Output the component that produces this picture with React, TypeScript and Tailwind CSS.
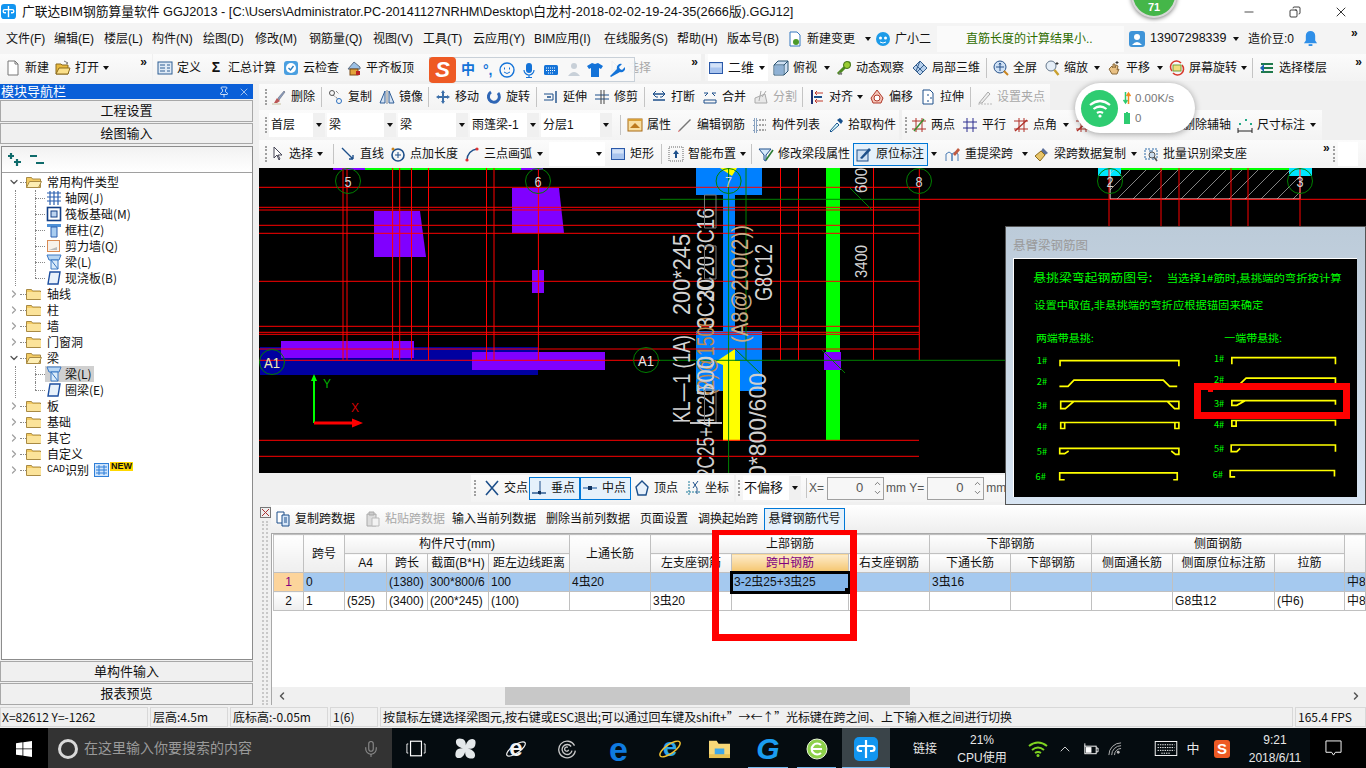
import type { ReactNode } from 'react';
import { Pin, X, ChevronDown, ChevronRight, ChevronLeft, ChevronUp, Minus, Copy, Mic } from 'lucide-react';

// small toolbar icons, all on a 16x16 grid
const ic: Record<string, ReactNode> = {
  page: <><path d="M3 1h7l3 3v11H3z" fill="#fff" stroke="#777" /><path d="M10 1v3h3" fill="none" stroke="#777" /></>,
  folder: <><path d="M1 14V4h5l1 1h6v9z" fill="#e8b93f" stroke="#8a6a1e" /><path d="M1 14l3-6h11l-2 6z" fill="#fbe08a" stroke="#8a6a1e" /><path d="M9 1l4 2-2 1" fill="none" stroke="#777" /></>,
  def: <><rect x="1" y="2" width="14" height="12" fill="#dfeaf6" stroke="#2f5f94" /><path d="M3 5h5M3 8h5M3 11h5M10 5h3M10 8h3M10 11h3" stroke="#2f5f94" /></>,
  cloud: <><rect x="1" y="1" width="14" height="14" rx="3" fill="#4a9fe0" /><circle cx="8" cy="8" r="5" fill="#fff" /><path d="M5.5 8l2 2 3-4" fill="none" stroke="#2c7fc2" strokeWidth="1.4" /></>,
  level: <><path d="M2 9l6-7 6 5v2H2z" fill="#9cc0e4" stroke="#5c6f86" /><rect x="4" y="9" width="8" height="6" fill="#e3a23a" stroke="#7a4a14" /><rect x="10" y="11" width="4" height="4" fill="#b22" /></>,
  box: <><rect x="1.5" y="2.5" width="13" height="11" fill="#a9c4ee" stroke="#2a58a8" /><rect x="2.5" y="3.5" width="11" height="4" fill="#d4e2f7" /></>,
  cube: <><path d="M5 1h10v10l-4 4H1V5z" fill="#cfe0f2" stroke="#27506e" /><path d="M1 5h10v10M11 5l4-4" fill="none" stroke="#27506e" /><rect x="1.5" y="5.5" width="9" height="9" fill="#8fb1d4" /></>,
  orbit: <><path d="M2 14L14 2" stroke="#4d8a1f" strokeWidth="3" /><circle cx="11" cy="5" r="3.5" fill="#9acd32" stroke="#3e6e14" /><path d="M3 13l3 1" stroke="#777" strokeWidth="2" /></>,
  local: <><path d="M1 8l7-7 7 7-7 7z" fill="#b7d0ec" stroke="#365f8e" /><path d="M4 5l7 7M8 1l-4 10M12 5L5 12" stroke="#365f8e" /></>,
  full: <><circle cx="7" cy="7" r="6" fill="#cfe1f5" stroke="#26518a" /><path d="M7 3v8M3 7h8M7 3L6 4.5M7 3l1 1.5" stroke="#26518a" /><path d="M11 11l4 4" stroke="#c9841e" strokeWidth="2" /></>,
  zoom: <><circle cx="7" cy="6" r="5" fill="#e5eef7" stroke="#66788c" /><path d="M10.5 10l4 5" stroke="#c9a02e" strokeWidth="2.4" /><path d="M13 2v3M11.5 3.5h3" stroke="#333" /></>,
  hand: <><path d="M3 9l3-3 1 2V4l2 0v4l1-3 2 1-1 4 2-1-2 5H6z" fill="#e9c184" stroke="#8b6a3a" /><path d="M11 1v3M9.5 2.5h3" stroke="#333" /></>,
  rotate: <><path d="M3 11a6 6 0 0 1 9-8" fill="none" stroke="#d8382c" strokeWidth="1.6" /><path d="M13 5a6 6 0 0 1-9 8" fill="none" stroke="#d8382c" strokeWidth="1.6" /><rect x="4" y="5" width="8" height="6" fill="#f2dd7c" stroke="#6fa03c" /></>,
  layers: <><path d="M2 4h12M2 8h12M2 12h12" stroke="#1f7a4c" strokeWidth="2" /><path d="M1 8l4-4v8z" fill="#1d63b4" /></>,
  del: <><path d="M3 14l3-5 3 3-3 2z" fill="#b55" /><path d="M7 9l6-7 1 1-6 8z" fill="#8aa0c0" stroke="#556" strokeWidth=".5" /><path d="M1 15h9" stroke="#c8c0a0" /></>,
  copy: <><circle cx="4" cy="4" r="2.5" fill="none" stroke="#555" /><circle cx="11" cy="12" r="2.5" fill="none" stroke="#2b70c0" /><path d="M5 6l5 4M8 2l3 3" stroke="#555" strokeDasharray="1 1" /></>,
  mirror: <><path d="M1 14L6 2v12zM15 14L10 2v12z" fill="#d5e3f4" stroke="#2e5d96" /><path d="M8 1v14" stroke="#888" /></>,
  move: <path d="M8 1l2 3H9v3h3V6l3 2-3 2V9H9v3h1l-2 3-2-3h1V9H4v1L1 8l3-2v1h3V4H6z" fill="#3b6ea8" />,
  rot: <path d="M5 3a5.500 5.500 0 1 0 7 1" fill="none" stroke="#2f66b5" strokeWidth="3" />,
  extend: <><path d="M1 5h9v6H1" fill="none" stroke="#1d4f8a" /><path d="M4 8h4M13 2v12" stroke="#1d4f8a" strokeWidth="1.4" /></>,
  trim: <><path d="M1 6h14M1 10h14" stroke="#1d4f8a" /><path d="M7 1v14M10 1v14" stroke="#444" /></>,
  brk: <><path d="M2 5h12M2 11h12" stroke="#1d4f8a" strokeWidth="1.4" /><path d="M5 8h2M9 8h2M5 2L2 5l3 3M11 2l3 3-3 3" fill="none" stroke="#1d4f8a" /></>,
  merge: <><path d="M2 4h4M10 4h4M2 11h12v3H2z" fill="none" stroke="#1d4f8a" /><path d="M3 7l3-3M13 7l-3-3" stroke="#1d4f8a" /></>,
  split: <><path d="M2 14h12L12 5 2 9z" fill="#e8e8e8" stroke="#aaa" /><path d="M8 2l-2 10M13 2l-4 6" stroke="#aaa" /></>,
  align: <><path d="M3 1v14" stroke="#1d2f6f" strokeWidth="2" /><path d="M14 4H6M14 12H6M6 4l2-2M6 4l2 2M6 12l2-2M6 12l2 2" stroke="#c0392b" /><path d="M5 8h8" stroke="#1d4f8a" strokeWidth="2" /></>,
  offset: <><path d="M8 1l6 8-2 5H4L2 9z" fill="#f4c5b8" stroke="#b0392b" /><circle cx="8" cy="9" r="3" fill="#fff" stroke="#b0392b" /></>,
  stretch: <><path d="M3 1h7l3 3v11H3z" fill="#fff" stroke="#1d4f8a" /><path d="M7 6h2M10 9h2M7 12h2" stroke="#1d4f8a" /></>,
  grayset: <><path d="M2 14l9-11 2 2-8 9z" fill="#eee" stroke="#aaa" /><path d="M1 15h14" stroke="#bbb" strokeDasharray="2 1" /></>,
  prop: <><rect x="1" y="2" width="14" height="12" fill="#f9dfa1" stroke="#a86a14" /><path d="M3 11l5-5 5 5z" fill="#bd7a1c" /><rect x="1" y="2" width="14" height="2" fill="#d9a036" /></>,
  edit: <><path d="M2 13L13 2l1 1L3 14z" fill="#777" /><path d="M2 13l-1 2 2-1z" fill="#c33" /></>,
  list: <><path d="M2 2h3v3H2zM2 7h3v3H2zM2 12h3v3H2z" fill="none" stroke="#1d4f8a" strokeDasharray="1 1" /><path d="M7 3h7M7 8h7M7 13h7" stroke="#555" strokeDasharray="2 1" /></>,
  picker: <><path d="M2 14l7-8 2 2-8 7z" fill="#dff" stroke="#16508c" /><path d="M9 3l4 4 2-3-3-3z" fill="#16508c" /></>,
  twop: <><path d="M1 4h14M1 12h14M5 1v14M11 1v14" stroke="#b03028" /><path d="M3 14L13 2" stroke="#3a8f2d" strokeWidth="1.4" /></>,
  para: <path d="M1 5h14M1 11h14M5 1v14M11 1v14" stroke="#2d2f8f" />,
  angle: <><path d="M1 4h14M1 12h14M6 1v14M11 1v14" stroke="#b03028" /><path d="M2 14L14 3" stroke="#b03028" strokeWidth="1.4" /></>,
  dim: <><path d="M1 14h14M1 11v5M15 11v5" stroke="#222" /><rect x="2" y="6" width="2" height="2" fill="#2a8" /><rect x="8" y="2" width="2" height="2" fill="#2a8" /><rect x="13" y="6" width="2" height="2" fill="#2a8" /></>,
  select: <path d="M5 1v11l3-3 2 5 1-1-2-4h4z" fill="#fff" stroke="#445" />,
  line: <path d="M2 2l11 11M13 13v-4M13 13H9" stroke="#1d4f8a" strokeWidth="1.4" />,
  addlen: <><circle cx="8" cy="9" r="6" fill="none" stroke="#1d4f8a" strokeWidth="1.6" /><path d="M8 6v6M5 9h6" stroke="#1d4f8a" /><circle cx="3" cy="3" r="1.5" fill="#c9841e" /></>,
  arc: <><path d="M3 14a11 11 0 0 1 10-11" fill="none" stroke="#1d4f8a" strokeWidth="1.4" /><circle cx="3" cy="14" r="1.6" fill="#d33" /><circle cx="13" cy="3" r="1.6" fill="#d33" /></>,
  smart: <><rect x="1" y="1" width="14" height="14" fill="none" stroke="#666" strokeDasharray="1 1" /><path d="M8 4l3 4H9v4H7V8H5z" fill="#1d4f8a" /></>,
  modify: <><path d="M1 3h12l-5 6v6l-2-1V9z" fill="#d6e9fb" stroke="#1d4f8a" /><path d="M8 14L15 4" stroke="#2a7a30" strokeWidth="1.6" /></>,
  mark: <><rect x="1" y="4" width="11" height="11" fill="#cfe0f3" stroke="#1d4f8a" /><path d="M4 12L13 2l2 2-9 9z" fill="#1d4f8a" /></>,
  lift: <><path d="M1 15V8l3-2 3 2v7M7 15V8l3-2 3 2v7" fill="none" stroke="#4b7cb5" /><path d="M8 8l5-6 2 2-5 6z" fill="#c05a40" /></>,
  brush: <><path d="M9 2l5 5-3 2-4-4z" fill="#5c6f9a" /><path d="M7 5l4 4-5 6-5-5z" fill="#e7c468" stroke="#8b6a1e" /></>,
  batch: <><path d="M2 3h5v10H2zM9 3h5v10H9z" fill="none" stroke="#2c6aa8" strokeDasharray="2 1" /><circle cx="9" cy="9" r="3" fill="#cde" stroke="#555" /><path d="M11 11l3 4" stroke="#555" strokeWidth="1.6" /></>,
  cross: <path d="M2 1l12 14M14 1L2 15" stroke="#1d4f8a" strokeWidth="1.6" />,
  perp: <><path d="M1 13h14" stroke="#1d4f8a" strokeWidth="1.4" /><path d="M9 1v14" stroke="#1d4f8a" /><rect x="7" y="11" width="3" height="3" fill="#12345f" /></>,
  mid: <><path d="M1 8h14" stroke="#4a7db8" strokeWidth="1.4" /><rect x="6" y="6" width="4" height="4" fill="#12345f" /></>,
  vert: <path d="M8 1l6 6-2 8H4L2 7z" fill="#e8f1fb" stroke="#1d4f8a" strokeWidth="1.4" />,
  coord: <><path d="M4 1v14M1 12h14" stroke="#1d7a9a" strokeDasharray="2 1" /><path d="M8 2l4 6v6M13 1L8 8" fill="none" stroke="#1d4f8a" /></>,
  copyrow: <><path d="M2 1h7v11H2z" fill="#fff" stroke="#1d4f8a" /><path d="M7 4h7v11H7z" fill="#d6e6f8" stroke="#1d4f8a" /><path d="M9 7h3M9 9h3M9 11h3" stroke="#1d4f8a" /></>,
  pasterow: <><path d="M2 3h9v12H2z" fill="#ddd" stroke="#aaa" /><path d="M4 1h5v3H4z" fill="#ccc" stroke="#aaa" /><path d="M7 7h7v8H7z" fill="#f3f3f3" stroke="#bbb" /></>,
};

function Ico({ n }: { n: string }) {
  return <svg viewBox="0 0 16 16" className="w-4 h-4 shrink-0">{ic[n]}</svg>;
}

function Caret({ className = '' }: { className?: string }) {
  return <svg viewBox="0 0 6 4" className={`w-[6px] h-1 shrink-0 ${className}`}><path d="M0 0h6L3 4z" fill="#111" /></svg>;
}

function Tool({ w, n, label, gray, caret }: { w: string; n: string; label?: string; gray?: boolean; caret?: boolean }) {
  return (
    <div className={`flex items-center gap-1 shrink-0 whitespace-nowrap ${w} ${gray ? 'text-[#a8a8a8]' : ''}`}>
      <Ico n={n} />
      {label && <span>{label}</span>}
      {caret && <Caret className="ml-auto mr-[6px]" />}
    </div>
  );
}

function Sep() {
  return <div className="w-[13px] h-5 shrink-0 flex justify-center"><div className="w-px h-full bg-[#c4c4c4]" /></div>;
}

function Grip() {
  return <div className="w-[3px] h-4 shrink-0 border-l-2 border-dotted border-[#a0a0a0]" />;
}

function More() {
  return <span className="text-[12px] font-bold leading-none">»</span>;
}

function Bar({ className = '', children }: { className?: string; children: ReactNode }) {
  return <div className={`flex items-center bg-linear-to-b from-[#fbfbfb] to-[#f3f3f3] ${className}`}>{children}</div>;
}

function Combo({ w, label }: { w: string; label: string }) {
  return (
    <div className={`flex items-center justify-between h-[24px] bg-white pl-[2px] shrink-0 mr-[2px] ${w}`}>
      <span>{label}</span>
      <div className="w-3 h-full bg-[#f0f0f0] flex items-center justify-center"><Caret /></div>
    </div>
  );
}

function Folder({ open }: { open?: boolean }) {
  return (
    <svg viewBox="0 0 16 12" className="w-4 h-3 shrink-0">
      <path d="M.5 11.500V1.500h5l1 1.500h8v8.500z" fill="#f3cb63" stroke="#a88a44" />
      {open && <path d="M.5 11.500l3-6h12l-3 6z" fill="#fdeeb4" stroke="#a88a44" />}
      {!open && <rect x="1" y="4" width="14" height="7" fill="#fbe39a" />}
    </svg>
  );
}

const treeIcons: Record<string, ReactNode> = {
  grid: <path d="M1 3h14M1 7h14M1 11h14M4 1v14M8 1v14M12 1v14" stroke="#2a5fb0" fill="none" strokeWidth="1.2" />,
  raft: <><rect x="1.500" y="1.500" width="13" height="13" fill="none" stroke="#123f86" strokeWidth="1.6" /><rect x="5" y="5" width="6" height="6" fill="#bcd3ef" stroke="#123f86" /></>,
  col: <><path d="M1 2h14v3H1z" fill="#4d8fd6" /><path d="M5 5h6v10H5z" fill="#a8ccf0" stroke="#2a5fb0" /></>,
  wall: <><rect x="1.500" y="2.500" width="12" height="11" fill="#f7f1ea" stroke="#d98b55" /><path d="M3 12l8-3v3z" fill="#bbb" /></>,
  beam: <><path d="M1 1h14l-2 5H3z" fill="#b8d6f3" stroke="#3a78c4" /><path d="M5 6h7v9H5z" fill="#d9ebfa" stroke="#3a78c4" /><path d="M5 6l7 9" stroke="#3a78c4" /></>,
  slab: <path d="M4 2h10l-2 12H2z" fill="#e8f1fb" stroke="#1c4ea0" strokeWidth="1.4" />,
};

function TreeGroup({ label, open, children }: { label: ReactNode; open?: boolean; children?: ReactNode }) {
  return (
    <>
      <div className="flex items-center h-4 pl-[6px]">
        {open ? <ChevronDown className="w-3 h-3 text-[#555]" strokeWidth={2.5} /> : <ChevronRight className="w-3 h-3 text-[#a0a0a0]" strokeWidth={2.5} />}
        <div className="w-[6px] border-t border-dotted border-[#888]" />
        <Folder open={open} />
        <div className="ml-[5px] flex items-center">{label}</div>
      </div>
      {children}
    </>
  );
}

function TreeChild({ n, label, last, active }: { n: string; label: string; last?: boolean; active?: boolean }) {
  return (
    <div className="flex items-center h-4">
      <div className="ml-[13px] w-[20px] h-full border-l border-dotted border-[#888]" />
      <div className="relative w-[10px] h-full">
        <div className={`absolute left-0 top-0 border-l border-dotted border-[#888] ${last ? 'h-1/2' : 'h-full'}`} />
        <div className="absolute left-0 top-1/2 w-full border-t border-dotted border-[#888]" />
      </div>
      <div className={`flex items-center gap-[3px] pr-[2px] h-4 ${active ? 'bg-[#d0d0d0]' : ''}`}>
        <svg viewBox="0 0 16 16" className="w-4 h-4 ml-[1px]">{treeIcons[n]}</svg>
        <span>{label}</span>
      </div>
    </div>
  );
}

function NavBtn({ label, h }: { label: string; h: string }) {
  return <div className={`flex items-center justify-center bg-[#f0f0f0] border border-[#a8a8a8] mt-px text-[13px] ${h}`}>{label}</div>;
}

const H = ({ children, ...rest }: { children?: ReactNode; colSpan?: number; rowSpan?: number; className?: string }) => (
  <td {...rest} className={`border border-[#c0c0c0] bg-linear-to-b from-white to-[#eeeeee] text-center p-0 h-[19px] overflow-hidden whitespace-nowrap ${rest.className ?? ''}`}>{children}</td>
);

const C = ({ children, className = '' }: { children?: ReactNode; className?: string }) => (
  <td className={`border border-[#c0c0c0] px-[2px] p-0 overflow-hidden whitespace-nowrap h-[19px] ${className}`}>{children}</td>
);

const COLS = ['w-[30px]', 'w-[41px]', 'w-[42px]', 'w-[41px]', 'w-[61px]', 'w-[81px]', 'w-[81px]', 'w-[81px]', 'w-[117px]', 'w-[81px]', 'w-[81px]', 'w-[81px]', 'w-[81px]', 'w-[102px]', 'w-[70px]', 'w-[21px]'];

function RebarTable() {
  return (
    <table className="table-fixed border-collapse w-[1091px] text-[12px] leading-none">
      <colgroup>{COLS.map((c, i) => <col key={i} className={c} />)}</colgroup>
      <tbody>
        <tr>
          <H rowSpan={2} />
          <H rowSpan={2}>跨号</H>
          <H colSpan={4}>构件尺寸(mm)</H>
          <H rowSpan={2}>上通长筋</H>
          <H colSpan={3}>上部钢筋</H>
          <H colSpan={2}>下部钢筋</H>
          <H colSpan={3}>侧面钢筋</H>
          <H rowSpan={2} />
        </tr>
        <tr>
          <H className="border-l-black">A4</H>
          <H>跨长</H>
          <H>截面(B*H)</H>
          <H>距左边线距离</H>
          <H>左支座钢筋</H>
          <td className="border border-[#c0c0c0] bg-linear-to-b from-[#fdeccb] to-[#f5c468] text-center text-[#800080] p-0 h-[19px]">跨中钢筋</td>
          <H>右支座钢筋</H>
          <H>下通长筋</H>
          <H>下部钢筋</H>
          <H>侧面通长筋</H>
          <H>侧面原位标注筋</H>
          <H>拉筋</H>
        </tr>
        <tr className="bg-[#a5c9ef]">
          <td className="border border-[#c0c0c0] bg-[#fcd49b] text-center text-[#800080] p-0">1</td>
          <C>0</C>
          <C className="border-l-black" />
          <C>(1380)</C>
          <C>300*800/6</C>
          <C>100</C>
          <C>4虫20</C>
          <C />
          <td className="relative border border-[#c0c0c0] bg-[#84b6ea] px-[2px] p-0 outline-[3px] -outline-offset-1 outline-black whitespace-nowrap">
            3-2虫25+3虫25
            <div className="absolute -right-[2px] -bottom-[2px] w-[5px] h-[5px] bg-black" />
          </td>
          <C />
          <C>3虫16</C>
          <C />
          <C />
          <C />
          <C />
          <C>中8</C>
        </tr>
        <tr>
          <td className="border border-[#c0c0c0] bg-linear-to-b from-white to-[#eeeeee] text-center p-0">2</td>
          <C>1</C>
          <C className="border-l-black">(525)</C>
          <C>(3400)</C>
          <C>(200*245)</C>
          <C>(100)</C>
          <C />
          <C>3虫20</C>
          <C />
          <C />
          <C />
          <C />
          <C />
          <C>G8虫12</C>
          <C>(中6)</C>
          <C>中8</C>
        </tr>
      </tbody>
    </table>
  );
}

function Cad() {
  const reds = [187.3, 207.3, 210, 225.3, 233.3, 281.3, 326.3, 332.3, 334.3, 349, 440.3, 456.3];
  const vr = [343, 347, 392.6, 399.7, 411.5, 428.5, 486.5, 494, 538.4, 780.5, 798.5, 873.5, 919.3];
  const vr2 = [1109, 1161, 1179, 1231, 1248, 1300];
  const circles: [number, number, string, string, number][] = [
    [348, 181, '5', '#d8d8d8', 7], [538, 181, '6', '#d8d8d8', 7], [728.6, 181, '7', '#d8d8d8', 7], [919, 181, '8', '#d8d8d8', 7],
    [1110, 181, '2', '#d8d8d8', 7], [1300, 181, '3', '#d8d8d8', 7], [272, 362, 'A1', '#f2efb0', 16], [646, 360, 'A1', '#e8e8e8', 16],
  ];
  const rot = (x: number, y: number, s: string, len: number, fill: string, size = 24) => (
    <text x={x} y={y} transform={`rotate(-90 ${x} ${y})`} fontSize={size} fill={fill} textLength={len} lengthAdjust="spacingAndGlyphs" fontFamily="Liberation Sans">{s}</text>
  );
  return (
    <svg viewBox="259 168 1107 305" className="block w-full h-full bg-black">
      <defs>
        <pattern id="hatch" width="16" height="16" patternUnits="userSpaceOnUse" patternTransform="translate(1100 168)">
          <path d="M0 16L16 0" stroke="#bbbbbb" strokeWidth=".7" />
        </pattern>
      </defs>
      <rect x="333" y="168" width="32" height="2" fill="#8000ff" />
      <rect x="365" y="168" width="156" height="2" fill="#00ff00" />
      <rect x="521" y="168" width="22" height="2" fill="#8000ff" />
      <rect x="260" y="347" width="278" height="28" fill="#0000a0" />
      <rect x="281" y="341" width="133" height="17" fill="#8000ff" />
      <rect x="472" y="352" width="133" height="18" fill="#8000ff" />
      <path d="M512 188h47l5 45h-52z" fill="#8000ff" />
      <path d="M374 211h46l6 46h-52z" fill="#8000ff" />
      <rect x="532" y="270" width="12" height="23" fill="#8000ff" />
      <rect x="696" y="168" width="66" height="27" fill="#0080ff" />
      <rect x="723" y="195" width="12" height="136" fill="#0080ff" />
      <rect x="696" y="331" width="66" height="60" fill="#0080ff" />
      <path d="M720 168h17l-5 8z" fill="#ffff00" />
      <rect x="723" y="361" width="17" height="80" fill="#ffff00" />
      <path d="M715.500 362l19.500-13v12h-12v4z" fill="#ffff00" />
      <rect x="826" y="168" width="14" height="272" fill="#00ff00" />
      <rect x="824" y="352" width="17" height="18" fill="#8000ff" />
      {/* hatched strip on the right */}
      <rect x="1098" y="168" width="23" height="8" fill="#00e5ff" />
      <rect x="1289" y="168" width="23" height="8" fill="#00e5ff" />
      <rect x="1121" y="168" width="168" height="2" fill="#00ff00" />
      <path d="M1110 170h190v29h-190z" fill="url(#hatch)" />
      <path d="M1110 170v29h190v-29" fill="none" stroke="#fff" />
      {/* red grid */}
      {reds.map(y => <line key={y} x1="259" x2="919" y1={y} y2={y} stroke="#ff0000" />)}
      <line x1="919" x2="1366" y1="199.300" y2="199.300" stroke="#ff0000" />
      <line x1="259" x2="660" y1="360.300" y2="360.300" stroke="#ff0000" />
      {vr.map(x => <line key={x} x1={x} x2={x} y1="168" y2="360" stroke="#ff0000" />)}
      {vr2.map(x => <line key={x} x1={x} x2={x} y1="168" y2="230" stroke="#ff0000" />)}
      <line x1="660" x2="919" y1="199.300" y2="199.300" stroke="#008000" />
      <line x1="660" x2="1010" y1="360.300" y2="360.300" stroke="#008000" />
      <line x1="728.600" x2="728.600" y1="168" y2="473" stroke="#008000" />
      <line x1="746" x2="746" y1="168" y2="360" stroke="#008000" />
      <path d="M850 188l22 22M822 350l23 23M735 349l25 24" stroke="#008000" fill="none" />
      {circles.map(([x, y, t, c, len]) => (
        <g key={`${x}-${t}`}>
          <circle cx={x} cy={y} r="12.500" fill="none" stroke="#008000" />
          <text x={x} y={y + 5.500} textAnchor="middle" fontSize="15" fill={c} textLength={len} lengthAdjust="spacingAndGlyphs" fontFamily="Liberation Sans">{t}</text>
        </g>
      ))}
      {/* rotated annotations */}
      {rot(690, 423, 'KL—1 (1A)', 88, '#d4d4d4')}
      {rot(690, 315, '200*245', 81, '#d4d4d4')}
      {rot(714, 478, '2C25+4C20', 92, '#d0d0d0')}
      {rot(714, 395, '(2)@1500', 78, '#c08a50')}
      {rot(714, 396, '500', 40, '#d0d0d0')}
      {rot(714, 329, '3C20', 50, '#d4d4d4')}
      {rot(714, 300, '3C20', 44, '#d4d4d4')}
      {rot(714, 254, '3C16', 46, '#d4d4d4')}
      {rot(748.400, 343, '(A8@200(2))', 118, '#c9ab88')}
      {rot(772, 301, 'G8C12', 57, '#d4d4d4')}
      {rot(766, 478, '0*800/600', 105, '#cfcfcf')}
      {rot(867, 278, '3400', 33, '#d4d4d4', 17)}
      {rot(867, 193, '600', 25, '#d4d4d4', 17)}
      <path d="M704.500 195h11.500v33h-11.500zM704.500 246h11.500v33h-11.500zM704.500 390h11.500v33h-11.500z" fill="none" stroke="#777" />
      <line x1="690" x2="722" y1="423" y2="423" stroke="#fff" strokeWidth="1.500" />
      {/* origin axes */}
      <path d="M313 423v-42h-2l3-7 3 7h-2v42z" fill="#00ff00" />
      <path d="M314 421.500h38v-3l11 4.500-11 4.500v-3h-38z" fill="#ff0000" />
      <text x="323" y="388" fontSize="12" fill="#00b000" fontFamily="Liberation Sans">Y</text>
      <text x="351" y="412" fontSize="12" fill="#d00000" fontFamily="Liberation Sans">X</text>
    </svg>
  );
}

function CantileverDrawing() {
  const green = (x: number, y: number, s: string, size = 33, len?: number) => (
    <text x={x} y={y} fontSize={size} fill="#00ff00" textLength={len} lengthAdjust="spacingAndGlyphs" fontFamily="Noto Sans CJK SC">{s}</text>
  );
  const paths = [
    'M176 602V585H535V602',
    'M174 663H200L218 644H488L507 663H530',
    'M220 708H178V730H192L218 708H510L535 708V730H522L500 708',
    'M208 772H178V790H190V772H535V790H523V772',
    'M202 858L190 866H175V850H535V868H525L512 858',
    'M190 945H175V924H530V945H518',
    'M695 596V576H1008V596',
    'M720 655L738 638H1008V655',
    'M740 706H695V720H710L735 706H1008V718',
    'M710 766H695V783H708V766H1008V782',
    'M720 850L710 860H693V840H1008V860',
    'M705 936H690V917H1005V935',
  ];
  const leftY = [596, 658, 730, 794, 870, 946];
  const rightY = [590, 652, 724, 788, 862, 940];
  return (
    <svg viewBox="40 278 1030 719" className="block w-full h-full">
      {green(95, 347, '悬挑梁弯起钢筋图号:', 36, 360)}
      {green(498, 346, '当选择1#筋时,悬挑端的弯折按计算', 30, 529)}
      {green(98, 428, '设置中取值,非悬挑端的弯折应根据锚固来确定', 30, 692)}
      {green(103, 528, '两端带悬挑:', 30, 175)}
      {green(672, 530, '一端带悬挑:', 30, 175)}
      {leftY.map((y, i) => <g key={y}>{green(i === 5 ? 102 : 106, y, `${i + 1}#`, 28)}</g>)}
      {rightY.map((y, i) => <g key={y}>{green(i === 5 ? 637 : 641, y, `${i + 1}#`, 28)}</g>)}
      {paths.map(d => <path key={d} d={d} fill="none" stroke="#ffff00" strokeWidth="5" />)}
    </svg>
  );
}

function Slot({ w, children, className = '' }: { w: string; children?: ReactNode; className?: string }) {
  return <div className={`flex items-center justify-center shrink-0 h-full ${w} ${className}`}>{children}</div>;
}

function Underlined({ w, active, children }: { w: string; active?: boolean; children: ReactNode }) {
  return (
    <div className={`relative flex items-center justify-center shrink-0 h-full ${w} ${active ? 'bg-[#3a4449]' : ''}`}>
      {children}
      <div className="absolute left-0 right-0 bottom-0 h-[2px] bg-[#76b9ed]" />
    </div>
  );
}

function AppLogo({ className }: { className: string }) {
  return (
    <svg viewBox="0 0 24 24" className={className}>
      <rect width="24" height="24" rx="5" fill="#1295f0" />
      <path d="M12 3v18M12 9H6a2 2 0 0 0 0 5h2M12 9h6a2 2 0 0 1 0 5h-2" fill="none" stroke="#fff" strokeWidth="2.200" />
    </svg>
  );
}

export default function App() {
  return (
    <div className="relative w-[1366px] h-[768px] overflow-hidden bg-[#f0f0f0] text-[12px] text-[#111] font-['Liberation_Sans','Noto_Sans_CJK_SC',sans-serif]">
      {/* title bar */}
      <div className="flex items-center h-[23px] bg-white">
        <AppLogo className="w-[15px] h-[15px] ml-[1px]" />
        <span className="ml-[6px] text-[12.75px] whitespace-nowrap">{'广联达BIM钢筋算量软件 GGJ2013 - [C:\\Users\\Administrator.PC-20141127NRHM\\Desktop\\白龙村-2018-02-02-19-24-35(2666版).GGJ12]'}</span>
        <div className="ml-auto flex items-center h-full mr-[2px]">
          <Slot w="w-[46px]"><Minus className="w-[14px] h-[14px] text-black" strokeWidth={1.2} /></Slot>
          <Slot w="w-[46px]"><Copy className="w-3 h-3 -scale-x-100 text-black" strokeWidth={1.5} /></Slot>
          <Slot w="w-[46px]"><X className="w-4 h-4 text-black" strokeWidth={1.2} /></Slot>
        </div>
      </div>

      {/* menu bar */}
      <div className="flex items-center h-[31px] bg-[#f4f4f4] pl-[6px] whitespace-nowrap">
        <span className="w-[48px] shrink-0">文件(F)</span>
        <span className="w-[50px] shrink-0">编辑(E)</span>
        <span className="w-[48px] shrink-0">楼层(L)</span>
        <span className="w-[51px] shrink-0">构件(N)</span>
        <span className="w-[52px] shrink-0">绘图(D)</span>
        <span className="w-[54px] shrink-0">修改(M)</span>
        <span className="w-[64px] shrink-0">钢筋量(Q)</span>
        <span className="w-[50px] shrink-0">视图(V)</span>
        <span className="w-[50px] shrink-0">工具(T)</span>
        <span className="w-[61px] shrink-0">云应用(Y)</span>
        <span className="w-[70px] shrink-0">BIM应用(I)</span>
        <span className="w-[73px] shrink-0">在线服务(S)</span>
        <span className="w-[50px] shrink-0">帮助(H)</span>
        <span className="w-[60px] shrink-0">版本号(B)</span>
        <div className="flex items-center gap-[4px] w-[88px] shrink-0">
          <svg viewBox="0 0 16 16" className="w-4 h-[18px] shrink-0"><path d="M3 1h7l3 3v11H3z" fill="#fff" stroke="#3578c0" /><circle cx="9" cy="11" r="3" fill="#4c9a2a" /></svg>
          <span>新建变更</span>
          <Caret className="ml-[6px]" />
        </div>
        <div className="flex items-center gap-[4px] w-[62px] shrink-0">
          <svg viewBox="0 0 16 16" className="w-4 h-4 shrink-0"><circle cx="8" cy="8" r="7" fill="#1d9be8" /><circle cx="5.500" cy="7" r="1.500" fill="#fff" /><circle cx="10.500" cy="7" r="1.500" fill="#fff" /><path d="M5 11q3 2 6 0" stroke="#fff" fill="none" /></svg>
          <span>广小二</span>
        </div>
        <div className="flex items-center h-[26px] w-[187px] shrink-0 bg-[#fafafa] pl-[29px] text-[#2f6d00]">直筋长度的计算结果小..</div>
        <svg viewBox="0 0 16 16" className="w-4 h-4 ml-[5px] shrink-0"><rect width="16" height="16" rx="3" fill="#3f94d8" /><circle cx="8" cy="6" r="3" fill="#fff" /><path d="M3 14q5-6 10 0z" fill="#fff" /></svg>
        <span className="ml-[5px] w-[80px] shrink-0 text-[12.5px]">13907298339</span>
        <Caret className="ml-[3px]" />
        <span className="ml-[9px]">造价豆:0</span>
        <svg viewBox="0 0 16 18" className="w-[15px] h-[17px] ml-[9px]"><path d="M8 1a5 5 0 0 1 5 5v5l2 3H1l2-3V6a5 5 0 0 1 5-5z" fill="#2f8fe8" /><rect x="6" y="15" width="4" height="2" fill="#2f8fe8" /></svg>
        <span className="ml-[33px] mb-3"><More /></span>
      </div>

      {/* first toolbar row */}
      <div className="flex h-[30px] pb-[3px] gap-px">
        <Bar className="w-[152px] shrink-0 pl-[5px] pr-[5px]">
          <Tool w="w-[50px]" n="page" label="新建" />
          <Tool w="w-[60px]" n="folder" label="打开" caret />
          <span className="ml-auto mb-3"><More /></span>
        </Bar>
        <Bar className="w-[548px] shrink-0 pl-[4px]">
          <Tool w="w-[51px]" n="def" label="定义" />
          <div className="flex items-center w-[75px] shrink-0 gap-[4px]"><span className="w-4 text-center text-[14px] font-bold">Σ</span><span>汇总计算</span></div>
          <Tool w="w-[63px]" n="cloud" label="云检查" />
          <Tool w="w-[71px]" n="level" label="平齐板顶" />
          <div className="w-[190px] shrink-0" />
          <Tool w="w-[48px]" n="select" label="选择" gray />
          <span className="ml-auto mb-3 mr-[3px]"><More /></span>
        </Bar>
        <div className="w-[2px] shrink-0" />
        <Bar className="flex-1 pl-[3px] pr-[4px]">
          <div className="flex items-center gap-1 w-[60px] h-full bg-white shrink-0">
            <Ico n="box" /><span className="text-[13px]">二维</span><Caret className="ml-auto mr-[3px]" />
          </div>
          <div className="w-[5px] shrink-0" />
          <Tool w="w-[63px]" n="cube" label="俯视" caret />
          <Tool w="w-[76px]" n="orbit" label="动态观察" />
          <Tool w="w-[68px]" n="local" label="局部三维" />
          <Sep />
          <Tool w="w-[51px]" n="full" label="全屏" />
          <Tool w="w-[62px]" n="zoom" label="缩放" caret />
          <Tool w="w-[63px]" n="hand" label="平移" caret />
          <Tool w="w-[77px]" n="rotate" label="屏幕旋转" caret />
          <Sep />
          <Tool w="w-[70px]" n="layers" label="选择楼层" />
          <span className="ml-auto mb-3"><More /></span>
        </Bar>
      </div>

      {/* work area */}
      <div className="flex h-[621px]">
        {/* module nav */}
        <div className="flex flex-col w-[253px] shrink-0">
          <div className="flex items-center h-[15px] bg-[#0a5fd8] text-white pl-[1px] text-[13px] leading-none">
            <span>模块导航栏</span>
            <Pin className="w-3 h-3 ml-auto rotate-0" strokeWidth={1.5} />
            <X className="w-3 h-3 ml-[8px] mr-[3px]" strokeWidth={1.2} />
          </div>
          <NavBtn label="工程设置" h="h-[22px]" />
          <NavBtn label="绘图输入" h="h-[21px]" />
          <div className="flex flex-col flex-1 mt-[2px] ml-[1px] border border-[#8c8c8c] bg-white min-h-0">
            <div className="flex items-center gap-[6px] h-[26px] shrink-0 pl-[5px] bg-linear-to-b from-[#f2f2f2] to-white border-b border-[#a0a0a0]">
              <svg viewBox="0 0 16 16" className="w-4 h-4"><path d="M4 1v6M1 4h6M10 7v7M7 10h7" stroke="#0f6b6b" strokeWidth="2.200" /></svg>
              <svg viewBox="0 0 16 16" className="w-4 h-4"><path d="M1 4h7M7 11h8" stroke="#0f6b6b" strokeWidth="2.200" /></svg>
            </div>
            <div className="flex-1 pt-px text-[12px] leading-4 font-['Noto_Sans_CJK_SC',sans-serif]">
              <TreeGroup open label="常用构件类型">
                <TreeChild n="grid" label="轴网(J)" />
                <TreeChild n="raft" label="筏板基础(M)" />
                <TreeChild n="col" label="框柱(Z)" />
                <TreeChild n="wall" label="剪力墙(Q)" />
                <TreeChild n="beam" label="梁(L)" />
                <TreeChild n="slab" label="现浇板(B)" last />
              </TreeGroup>
              <TreeGroup label="轴线" />
              <TreeGroup label="柱" />
              <TreeGroup label="墙" />
              <TreeGroup label="门窗洞" />
              <TreeGroup open label="梁">
                <TreeChild n="beam" label="梁(L)" active />
                <TreeChild n="slab" label="圈梁(E)" last />
              </TreeGroup>
              <TreeGroup label="板" />
              <TreeGroup label="基础" />
              <TreeGroup label="其它" />
              <TreeGroup label="自定义" />
              <TreeGroup label={<><span className="text-[10px] font-['Liberation_Mono',monospace]">CAD</span><span>识别</span>
                <svg viewBox="0 0 15 14" className="w-[15px] h-[14px] ml-[5px]"><rect x=".5" y=".5" width="14" height="13" fill="#cfe4fb" stroke="#2f7fd8" /><path d="M5 2v10M10 2v10M2 4h11M2 7h11M2 10h11" stroke="#2f7fd8" /></svg>
                <span className="self-start ml-px px-px bg-[#ffd800] text-[9px] leading-[9px] font-bold font-['Liberation_Sans',sans-serif]">NEW</span></>} />
            </div>
          </div>
          <NavBtn label="单构件输入" h="h-[21px]" />
          <NavBtn label="报表预览" h="h-[22px]" />
        </div>

        {/* drawing side */}
        <div className="flex flex-col ml-[6px] w-[1107px] shrink-0">
          <Bar className="h-[26px] w-[791px] shrink-0 pl-[6px]">
            <Grip />
            <div className="w-[3px] shrink-0" />
            <Tool w="w-[44px]" n="del" label="删除" />
            <Sep />
            <Tool w="w-[51px]" n="copy" label="复制" />
            <Tool w="w-[43px]" n="mirror" label="镜像" />
            <Sep />
            <Tool w="w-[51px]" n="move" label="移动" />
            <Tool w="w-[44px]" n="rot" label="旋转" />
            <Sep />
            <Tool w="w-[51px]" n="extend" label="延伸" />
            <Tool w="w-[44px]" n="trim" label="修剪" />
            <Sep />
            <Tool w="w-[51px]" n="brk" label="打断" />
            <Tool w="w-[51px]" n="merge" label="合并" />
            <Tool w="w-[43px]" n="split" label="分割" gray />
            <Sep />
            <Tool w="w-[60px]" n="align" label="对齐" caret />
            <Tool w="w-[51px]" n="offset" label="偏移" />
            <Tool w="w-[44px]" n="stretch" label="拉伸" />
            <Sep />
            <Tool w="w-[73px]" n="grayset" label="设置夹点" gray />
          </Bar>

          <div className="flex h-[30px] shrink-0">
            <Bar className="w-[640px] shrink-0 pl-[6px]">
              <Grip />
              <div className="w-[1px] shrink-0" />
              <Combo w="w-[56px]" label="首层" />
              <Combo w="w-[69px]" label="梁" />
              <Combo w="w-[70px]" label="梁" />
              <Combo w="w-[69px]" label="雨篷梁-1" />
              <Combo w="w-[71px]" label="分层1" />
              <Sep />
              <Tool w="w-[50px]" n="prop" label="属性" />
              <Tool w="w-[75px]" n="edit" label="编辑钢筋" />
              <Tool w="w-[76px]" n="list" label="构件列表" />
              <Tool w="w-[72px]" n="picker" label="拾取构件" />
            </Bar>
            <div className="w-[3px] shrink-0" />
            <Bar className="w-[420px] shrink-0 pl-[3px]">
              <Grip />
              <div className="w-[3px] shrink-0" />
              <Tool w="w-[51px]" n="twop" label="两点" />
              <Tool w="w-[51px]" n="para" label="平行" />
              <Tool w="w-[62px]" n="angle" label="点角" caret />
              <Tool w="w-[88px]" n="angle" />
              <Tool w="w-[74px]" n="del" label="删除辅轴" />
              <Tool w="w-[85px]" n="dim" label="尺寸标注" caret />
            </Bar>
          </div>

          <Bar className="h-[28px] shrink-0 pl-[6px] pr-[3px]">
            <Grip />
            <div className="w-px shrink-0" />
            <Tool w="w-[58px]" n="select" label="选择" caret />
            <Sep />
            <Tool w="w-[50px]" n="line" label="直线" />
            <Tool w="w-[74px]" n="addlen" label="点加长度" />
            <Tool w="w-[85px]" n="arc" label="三点画弧" caret />
            <div className="flex items-center justify-end w-[56px] h-[24px] bg-white shrink-0 pr-[3px]"><Caret /></div>
            <div className="w-[5px] shrink-0" />
            <Tool w="w-[45px]" n="box" label="矩形" />
            <Sep />
            <Tool w="w-[77px]" n="smart" label="智能布置" caret />
            <Sep />
            <Tool w="w-[95px]" n="modify" label="修改梁段属性" />
            <div className="flex items-center gap-1 w-[75px] h-[23px] shrink-0 border border-[#0078d7] bg-[#e5f1fb] pl-[2px]"><Ico n="mark" /><span>原位标注</span></div>
            <Caret className="mx-[3px]" />
            <div className="w-[5px] shrink-0" />
            <Tool w="w-[89px]" n="lift" label="重提梁跨" caret />
            <Tool w="w-[109px]" n="brush" label="梁跨数据复制" caret />
            <Tool w="w-[110px]" n="batch" label="批量识别梁支座" />
            <span className="ml-[70px] mb-3"><More /></span>
            <div className="w-[3px] shrink-0" />
            <Grip />
            <div className="w-[20px] h-[24px] bg-white ml-[2px]" />
          </Bar>

          <div className="h-[305px] shrink-0 bg-black"><Cad /></div>

          {/* snap bar */}
          <div className="flex items-center h-[30px] shrink-0 pl-[212px]">
            <Bar className="h-[27px] w-[263px] shrink-0 pl-[3px]">
              <Grip />
              <div className="w-[7px] shrink-0" />
              <Tool w="w-[45px]" n="cross" label="交点" />
              <div className="flex items-center gap-1 w-[51px] h-[23px] shrink-0 border border-[#0078d7] bg-[#e5f1fb] pl-px"><Ico n="perp" /><span>垂点</span></div>
              <div className="flex items-center gap-1 w-[51px] h-[23px] shrink-0 border border-[#0078d7] bg-[#e5f1fb] pl-px"><Ico n="mid" /><span>中点</span></div>
              <div className="w-[3px] shrink-0" />
              <Tool w="w-[51px]" n="vert" label="顶点" />
              <Tool w="w-[40px]" n="coord" label="坐标" />
            </Bar>
            <Bar className="h-[27px] flex-1 ml-[2px] pl-[2px] text-[#555]">
              <Grip />
              <div className="flex items-center justify-between w-[58px] h-[24px] ml-[2px] bg-white pl-px text-[#111] text-[13px]">
                <span>不偏移</span>
                <div className="w-3 h-full bg-[#f0f0f0] flex items-center justify-center"><Caret /></div>
              </div>
              <div className="w-px h-5 bg-[#c4c4c4] ml-[5px]" />
              <span className="ml-[2px]">X=</span>
              <div className="flex items-center justify-between w-[57px] h-[23px] ml-[3px] border border-[#a0a0a0] bg-[#f7f7f7] pl-[28px] pr-px text-[13px]">
                <span>0</span>
                <div className="flex flex-col"><ChevronUp className="w-[9px] h-[9px]" /><ChevronDown className="w-[9px] h-[9px]" /></div>
              </div>
              <span className="ml-[2px]">mm Y=</span>
              <div className="flex items-center justify-between w-[57px] h-[23px] ml-[3px] border border-[#a0a0a0] bg-[#f7f7f7] pl-[28px] pr-px text-[13px]">
                <span>0</span>
                <div className="flex flex-col"><ChevronUp className="w-[9px] h-[9px]" /><ChevronDown className="w-[9px] h-[9px]" /></div>
              </div>
              <span className="ml-[2px]">mm</span>
            </Bar>
          </div>

          {/* rebar grid panel */}
          <div className="flex flex-1 min-h-0 mt-[2px]">
            <div className="flex flex-col items-center w-[12px] shrink-0">
              <svg viewBox="0 0 11 11" className="w-[11px] h-[11px] mt-[2px]"><rect x=".5" y=".5" width="10" height="10" fill="#eee" stroke="#777" /><path d="M2 2l7 7M9 2L2 9" stroke="#a33" /></svg>
              <div className="flex-1 w-[6px] mt-[3px] border-x-2 border-dotted border-[#c8c8c8]" />
            </div>
            <div className="flex flex-col flex-1 min-w-0">
              <div className="flex items-center h-[28px] shrink-0 pl-[4px] bg-linear-to-b from-white to-[#eeeeee] whitespace-nowrap">
                <Tool w="w-[90px]" n="copyrow" label="复制跨数据" />
                <Tool w="w-[87px]" n="pasterow" label="粘贴跨数据" gray />
                <span className="w-[94px] shrink-0">输入当前列数据</span>
                <span className="w-[94px] shrink-0">删除当前列数据</span>
                <span className="w-[58px] shrink-0">页面设置</span>
                <span className="w-[66px] shrink-0">调换起始跨</span>
                <div className="flex items-center justify-center w-[81px] h-[23px] border border-[#0078d7] bg-[#e5f1fb]">悬臂钢筋代号</div>
              </div>
              <div className="flex-1 min-h-0 ml-0 border-l border-t border-[#a8a8a8] bg-white overflow-hidden pl-[1px]">
                <RebarTable />
              </div>
              <div className="flex items-center justify-between h-[18px] shrink-0 border-l border-[#a8a8a8] bg-[#f0f0f0] relative">
                <ChevronLeft className="w-3 h-3 ml-[4px] text-[#555]" strokeWidth={3} />
                <div className="absolute left-[233px] top-0 bottom-0 w-[405px] bg-[#c8c8c8]" />
                <ChevronRight className="w-3 h-3 mr-[4px] text-[#555]" strokeWidth={3} />
              </div>
            </div>
          </div>
        </div>
      </div>

      {/* status bar */}
      <div className="flex gap-[2px] h-[20px] mt-[2px] text-[12px] leading-[18px] whitespace-nowrap font-['Noto_Sans_CJK_SC',sans-serif]">
        <div className="w-[148px] border border-[#d8d8d8] pl-[1px]">X=82612 Y=-1262</div>
        <div className="w-[78px] border border-[#d8d8d8] pl-[2px]">层高:4.5m</div>
        <div className="w-[98px] border border-[#d8d8d8] pl-[2px]">底标高:-0.05m</div>
        <div className="w-[48px] border border-[#d8d8d8] pl-[2px]">1(6)</div>
        <div className="w-[913px] border border-[#d8d8d8] pl-[2px] overflow-hidden tracking-[-0.12px]">按鼠标左键选择梁图元,按右键或ESC退出;可以通过回车键及shift+”→←↑”光标键在跨之间、上下输入框之间进行切换</div>
        <div className="flex-1 border border-[#d8d8d8] pl-[2px]">165.4 FPS</div>
      </div>

      {/* taskbar */}
      <div className="flex h-[41px] mt-px bg-[#050c10] text-[#e8e8e8]">
        <Slot w="w-[48px]" className="bg-black">
          <svg viewBox="0 0 16 16" className="w-4 h-4"><path d="M0 2.200l6.500-.9v6.200H0zM7.300 1.200L16 0v7.500H7.300zM0 8.300h6.500v6.300L0 13.700zM7.300 8.300H16V16l-8.700-1.200z" fill="#fff" /></svg>
        </Slot>
        <div className="flex items-center w-[344px] shrink-0 bg-[#333333] text-[#9a9a9a] text-[14px] pl-[10px]">
          <div className="w-[20px] h-[20px] rounded-full border-[3px] border-[#d8d8d8]" />
          <span className="ml-[6px]">在这里输入你要搜索的内容</span>
          <Mic className="w-[18px] h-[18px] ml-auto mr-[12px] text-[#8a8a8a]" strokeWidth={1.5} />
        </div>
        <Slot w="w-[48px]">
          <svg viewBox="0 0 22 18" className="w-[20px] h-[17px]"><rect x="5" y="1" width="12" height="16" fill="none" stroke="#fff" strokeWidth="1.300" /><path d="M2.500 4H1v10h1.500M19.500 4H21v10h-1.500" fill="none" stroke="#fff" /></svg>
        </Slot>
        <Slot w="w-[50px]">
          <svg viewBox="0 0 24 24" className="w-[23px] h-[23px]"><path d="M12 12C6 12 2 9 2 5s4-4 7-3 4 5 3 10zM12 12c0-6 3-10 7-10s4 4 3 7-5 4-10 3zM12 12c6 0 10 3 10 7s-4 4-7 3-4-5-3-10zM12 12c0 6-3 10-7 10s-4-4-3-7 5-4 10-3z" fill="#e4e8ea" /></svg>
        </Slot>
        <Slot w="w-[52px]">
          <svg viewBox="0 0 24 24" className="w-[24px] h-[24px]"><text x="12" y="19" textAnchor="middle" fontSize="24" fontWeight="700" fill="#f4f4f4" fontFamily="Liberation Sans">e</text><ellipse cx="12" cy="12" rx="11" ry="4" transform="rotate(-35 12 12)" fill="none" stroke="#f4f4f4" strokeWidth="1.200" /></svg>
        </Slot>
        <Slot w="w-[50px]">
          <svg viewBox="0 0 24 24" className="w-[20px] h-[20px]"><path d="M21 8A10 10 0 1 0 22 14M17 9a6 6 0 1 0 1 5M13 10a2.500 2.500 0 1 0 1 3" fill="none" stroke="#c8c8c8" strokeWidth="1.600" /></svg>
        </Slot>
        <Slot w="w-[53px]"><span className="text-[34px] leading-none text-[#0f7be0] font-bold font-['Liberation_Sans',sans-serif]">e</span></Slot>
        <Slot w="w-[50px]">
          <svg viewBox="0 0 24 24" className="w-[24px] h-[24px]"><text x="12" y="19" textAnchor="middle" fontSize="26" fontWeight="700" fill="#2ea6ea" fontFamily="Liberation Sans">e</text><ellipse cx="12" cy="12" rx="12" ry="4.500" transform="rotate(-35 12 12)" fill="none" stroke="#f2c230" strokeWidth="1.400" /></svg>
        </Slot>
        <Slot w="w-[48px]">
          <svg viewBox="0 0 24 22" className="w-[23px] h-[21px]"><path d="M1 3h8l2 3h12v15H1z" fill="#f8d878" /><rect x="7" y="11" width="10" height="7" fill="#3fa7e8" /><rect x="1" y="17" width="22" height="4" fill="#e8c050" /></svg>
        </Slot>
        <div className="w-[5px] shrink-0" />
        <Underlined w="w-[40px]">
          <span className="text-[30px] leading-none font-bold italic text-[#1a9cf0] font-['Liberation_Sans',sans-serif]">G</span>
        </Underlined>
        <div className="w-[9px] shrink-0" />
        <Underlined w="w-[39px]">
          <svg viewBox="0 0 24 24" className="w-[24px] h-[24px]"><circle cx="12" cy="12" r="10" fill="#8dd14a" stroke="#e8f5d8" /><path d="M7 12h10M16 8a5.500 5.500 0 1 0 0 8" fill="none" stroke="#fff" strokeWidth="2.200" /></svg>
        </Underlined>
        <div className="w-[6px] shrink-0" />
        <Underlined w="w-[48px]" active><AppLogo className="w-[24px] h-[24px]" /></Underlined>
        <Slot w="w-[70px]" className="text-[12px]">链接</Slot>
        <div className="flex flex-col items-center justify-center gap-[2px] w-[44px] shrink-0 text-[12px] leading-4 whitespace-nowrap">
          <span>21%</span>
          <span>CPU使用</span>
        </div>
        <div className="w-[16px] shrink-0" />
        <Slot w="w-[36px]">
          <svg viewBox="0 0 20 16" className="w-[20px] h-[16px]"><path d="M1 5q9-7 18 0M4 9q6-5 12 0M7 12q3-2 6 0" fill="none" stroke="#7ed321" strokeWidth="2" /><circle cx="10" cy="14.500" r="1.500" fill="#7ed321" /></svg>
        </Slot>
        <Slot w="w-[18px]"><ChevronUp className="w-[16px] h-[16px]" strokeWidth={1.3} /></Slot>
        <div className="w-[4px] shrink-0" />
        <Slot w="w-[24px]">
          <svg viewBox="0 0 18 14" className="w-[17px] h-[14px]"><rect x="3" y="4" width="12" height="8" fill="none" stroke="#fff" /><rect x="4" y="5" width="6" height="6" fill="#fff" /><path d="M15 6h2v4h-2M3 1v3" stroke="#fff" fill="none" /></svg>
        </Slot>
        <Slot w="w-[25px]">
          <svg viewBox="0 0 16 16" className="w-[15px] h-[15px]"><path d="M2 15A13 13 0 0 1 15 2M5 15A10 10 0 0 1 15 5M8 15a7 7 0 0 1 7-7" fill="none" stroke="#bbb" /><circle cx="12" cy="12" r="1.500" fill="#bbb" /></svg>
        </Slot>
        <div className="w-[19px] shrink-0" />
        <Slot w="w-[39px]">
          <svg viewBox="0 0 24 16" className="w-[24px] h-[15px]"><rect x=".5" y=".5" width="23" height="15" fill="none" stroke="#fff" /><path d="M3 4h18M3 7h18M3 10h18M7 13h10" stroke="#fff" strokeDasharray="1.500 1" /></svg>
        </Slot>
        <Slot w="w-[16px]" className="text-[13px]">中</Slot>
        <div className="w-[9px] shrink-0" />
        <Slot w="w-[24px]">
          <span className="flex items-center justify-center w-[16px] h-[18px] rounded-[3px] bg-[#ee5a24] text-white font-bold text-[15px] leading-none font-['Liberation_Sans',sans-serif]">S</span>
        </Slot>
        <div className="w-[6px] shrink-0" />
        <div className="flex flex-col items-center justify-center gap-[2px] w-[70px] shrink-0 text-[12px] leading-4 whitespace-nowrap">
          <span>9:21</span>
          <span>2018/6/11</span>
        </div>
        <Slot w="w-[46px]" className="bg-black">
          <svg viewBox="0 0 18 18" className="w-[17px] h-[17px]"><path d="M1 1h16v12h-6l-2 3-2-3H1z" fill="none" stroke="#fff" /></svg>
        </Slot>
        <div className="flex-1 bg-black" />
      </div>

      {/* things floating over the application */}
      <div className="absolute left-[1131px] -top-[28px] w-[46px] h-[46px] rounded-full bg-[#45b649] border-[2px] border-[#d8d8d8] shadow-[0_1px_4px_rgba(0,0,0,0.5)] flex items-end justify-center pb-[3px] text-white text-[11px] leading-none font-bold">71</div>

      <div className="absolute left-[429px] top-[57px] w-[206px] h-[25px] flex items-center bg-[#f8f8f8]/95 border border-[#c8d0d8] text-[#1473d8]">
        <span className="absolute -left-px -top-[1px] flex items-center justify-center w-[27px] h-[26px] rounded-[4px] bg-[#ee5a24] text-white font-bold text-[22px] leading-none italic font-['Liberation_Sans',sans-serif]">S</span>
        <span className="ml-[31px] text-[14px] font-bold">中</span>
        <span className="ml-[8px] text-[14px] font-bold leading-none">°,</span>
        <svg viewBox="0 0 16 16" className="w-4 h-4 ml-[6px]"><circle cx="8" cy="8" r="7" fill="none" stroke="#1473d8" strokeWidth="1.400" /><path d="M5 10q3 3 6 0M5.500 5.500v2M10.500 5.500v2" stroke="#1473d8" fill="none" /></svg>
        <svg viewBox="0 0 16 16" className="w-4 h-4 ml-[6px]"><rect x="5" y="1" width="6" height="10" rx="3" fill="#1473d8" /><path d="M3 8a5 5 0 0 0 10 0M8 13v3M5 15.500h6" stroke="#1473d8" fill="none" strokeWidth="1.200" /></svg>
        <svg viewBox="0 0 16 16" className="w-4 h-4 ml-[6px]"><rect x="1" y="3" width="14" height="10" rx="1.500" fill="#1473d8" /><path d="M3 6h10M3 8.500h10M5 11h6" stroke="#fff" strokeDasharray="1 1" /></svg>
        <svg viewBox="0 0 16 16" className="w-4 h-4 ml-[8px]"><circle cx="7" cy="4" r="3" fill="#c8d0d8" /><path d="M1 14q6-8 12 0z" fill="#c8d0d8" /></svg>
        <svg viewBox="0 0 16 16" className="w-4 h-4 ml-[4px]"><path d="M5 1l3 1 3-1 5 3-2 3-2-1v9H4V6L2 7 0 4z" fill="#1473d8" /></svg>
        <svg viewBox="0 0 16 16" className="w-4 h-4 ml-[6px]"><path d="M2 15l-1-1 7-7a4 4 0 0 1 5-5l-3 3 1 2 2 1 3-3a4 4 0 0 1-5 5z" fill="#1473d8" /></svg>
      </div>

      <div className="absolute left-[1075px] top-[83px] flex items-center w-[120px] h-[50px] rounded-full bg-white shadow-[0_1px_6px_rgba(0,0,0,0.35)] pl-[6px] text-[#777]">
        <div className="flex items-center justify-center w-[37px] h-[37px] rounded-full bg-[#2ecc71]">
          <svg viewBox="0 0 24 20" className="w-[24px] h-[20px]"><path d="M2 7q10-8 20 0M5.500 11q6.500-5 13 0M9 15q3-2 6 0" fill="none" stroke="#fff" strokeWidth="2.200" /><circle cx="12" cy="18" r="1.600" fill="#fff" /></svg>
        </div>
        <div className="flex flex-col ml-[5px] gap-[6px] text-[11.5px] leading-[14px]">
          <div className="flex items-center gap-[4px]"><svg viewBox="0 0 8 14" className="w-2 h-[14px]"><path d="M2.500 1v11M.5 9l2 3 2-3" stroke="#2ecc71" strokeWidth="1.500" fill="none" /><path d="M5.500 13V2M3.500 5l2-3 2 3" stroke="#f28a1e" strokeWidth="1.500" fill="none" /></svg><span>0.00K/s</span></div>
          <div className="flex items-center gap-[4px]"><svg viewBox="0 0 8 14" className="w-2 h-[14px]"><path d="M3 1h2v1h2v11H1V2h2z" fill="#2ecc71" /></svg><span>0</span></div>
        </div>
      </div>

      <div className="absolute left-[1005px] top-[226px] w-[361px] h-[279px] flex flex-col border border-[#555] bg-linear-to-b from-[#bccbd9] to-[#d8e5f3] pl-[7px] pr-[8px] pb-[7px]">
        <div className="h-[31px] shrink-0 flex items-center pt-[6px] text-[#9a9a9a] text-[12.5px] font-['Noto_Sans_CJK_SC',sans-serif]">悬臂梁钢筋图</div>
        <div className="flex-1 min-h-0 bg-black border-t border-l border-white border-r-[#9a9a9a] border-b-[#9a9a9a]"><CantileverDrawing /></div>
      </div>

      <div className="absolute left-[1194px] top-[383px] w-[156px] h-[36px] border-[7px] border-[#ff0000]">
        <div className="absolute left-[7px] top-0 w-[5px] h-[2px] bg-[#ff0000]" />
      </div>
      <div className="absolute left-[712px] top-[530px] w-[145px] h-[111px] border-[7px] border-t-[5px] border-[#ff0000]" />
    </div>
  );
}
